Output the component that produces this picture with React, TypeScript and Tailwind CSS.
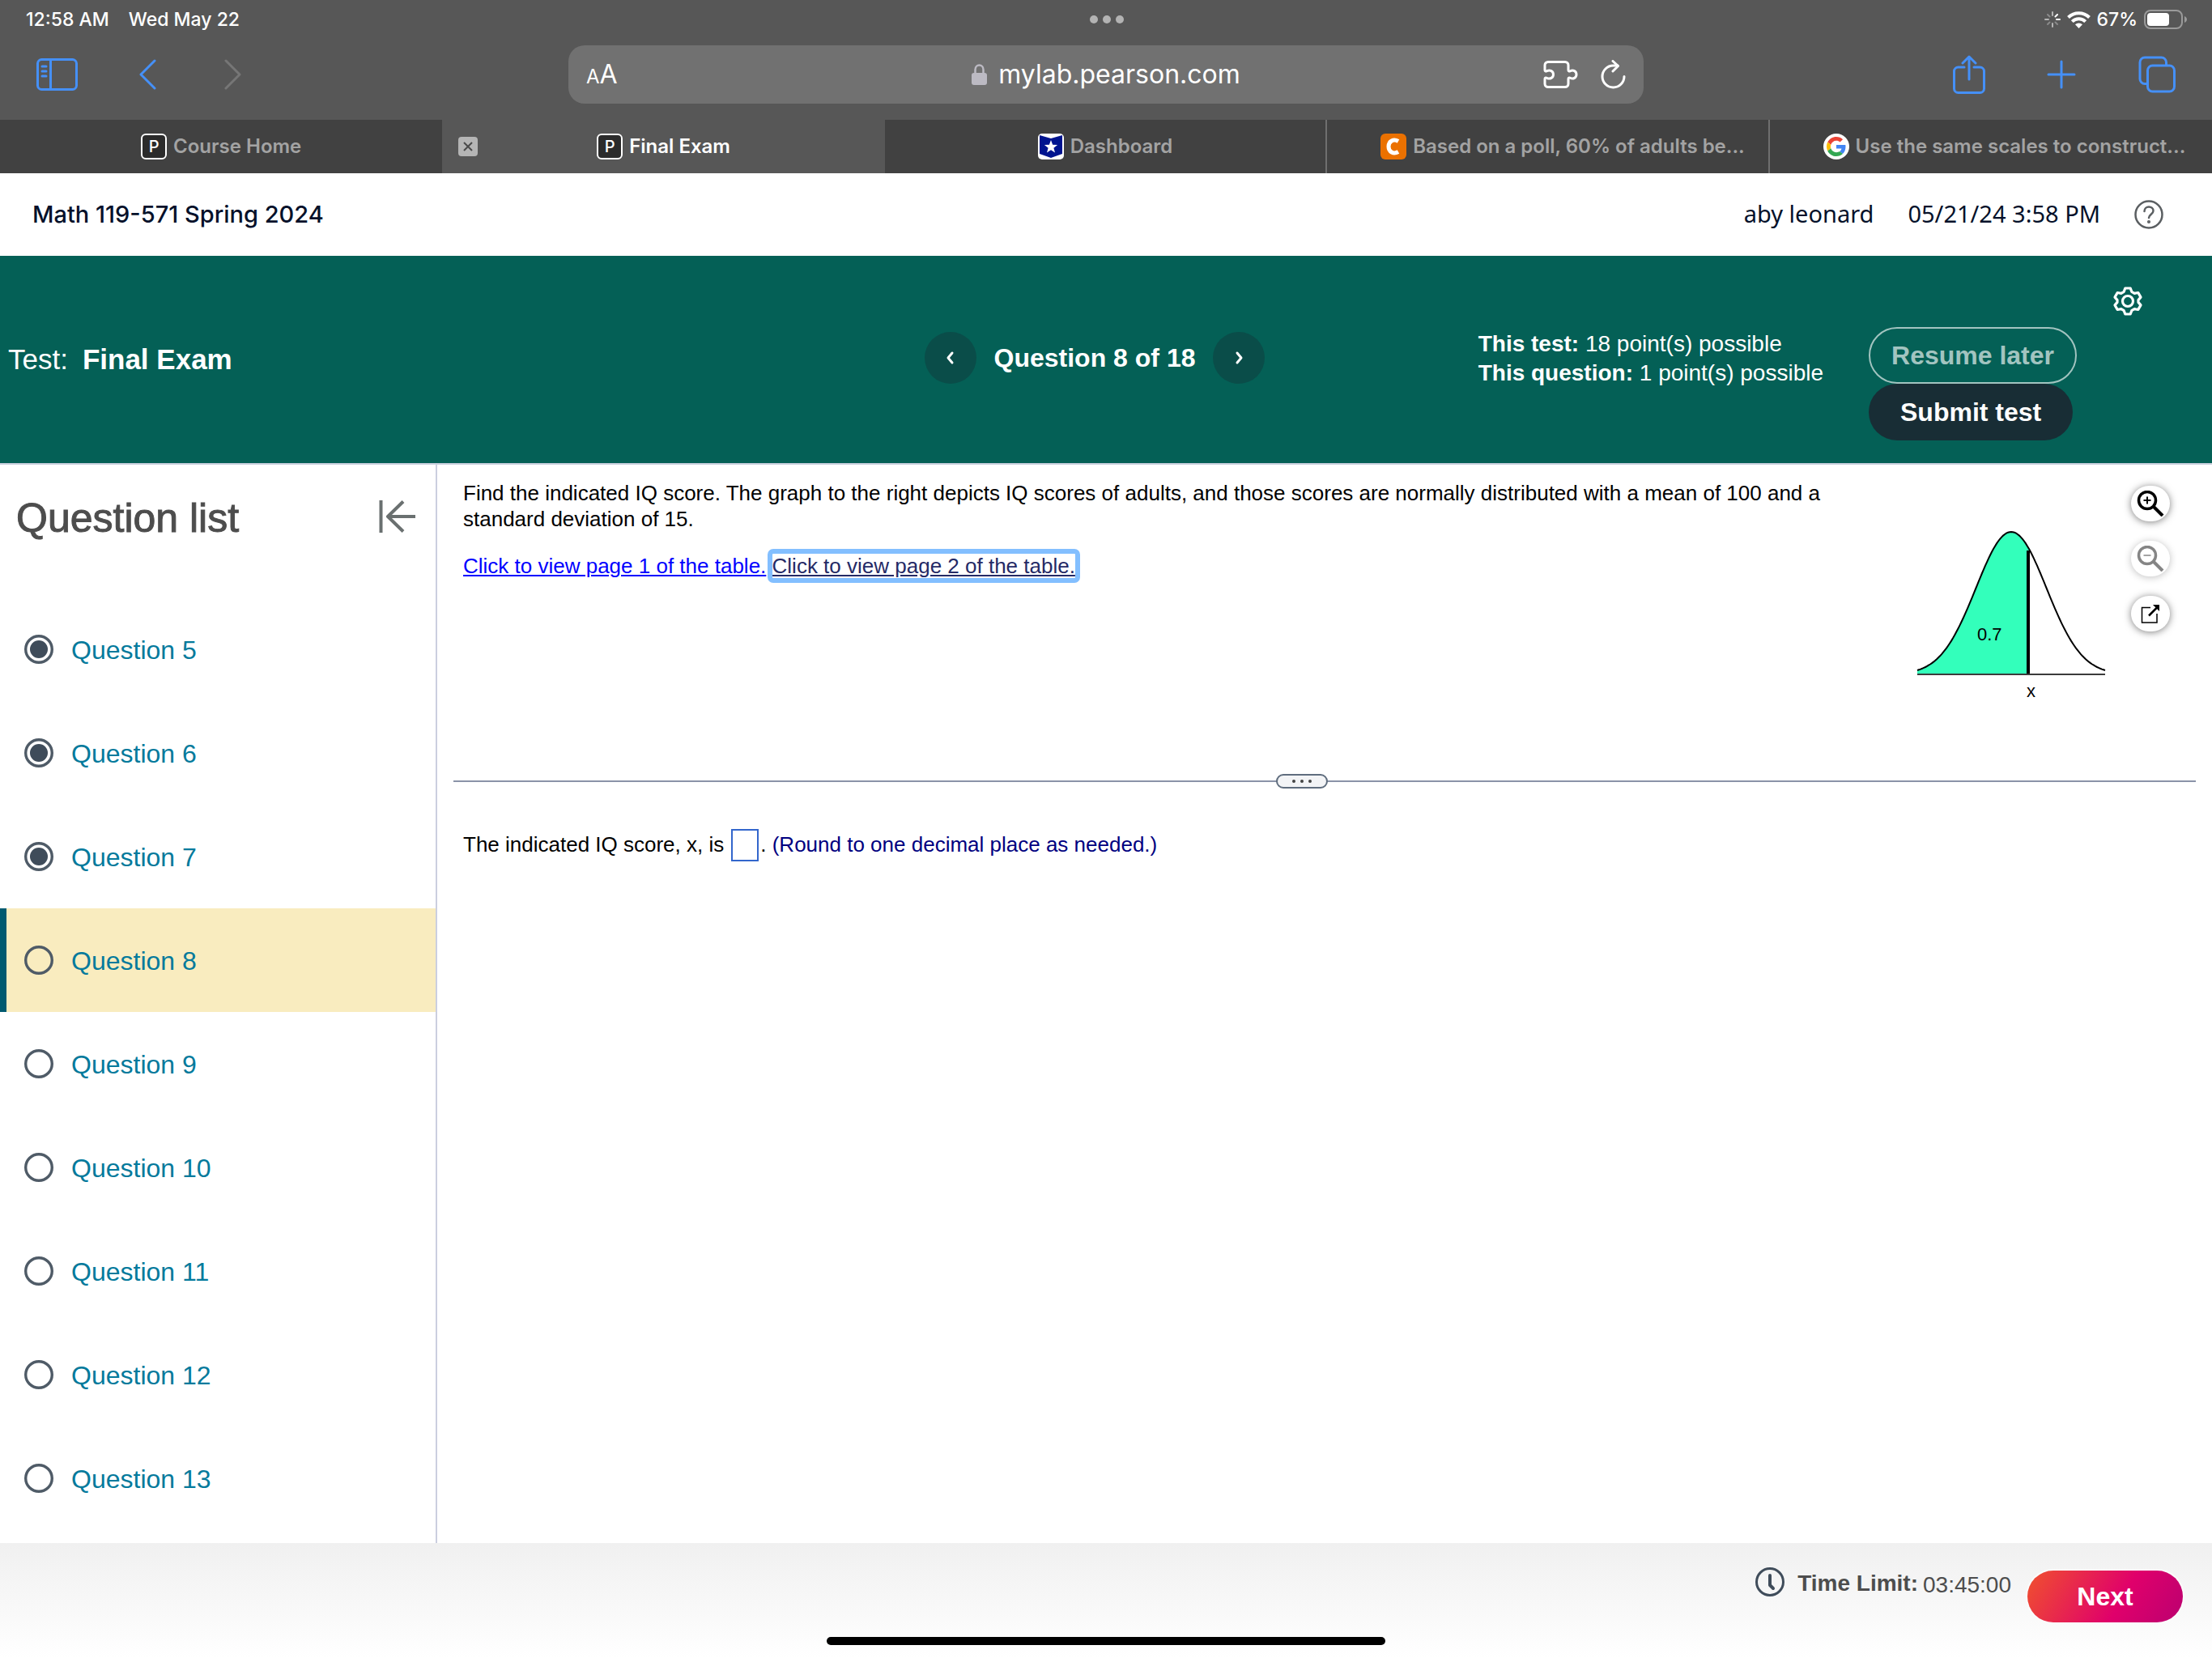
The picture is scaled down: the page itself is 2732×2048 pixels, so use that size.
import type { ReactNode } from "react"
import clsx from "clsx"

type Tab = {
	title: string
	icon: ReactNode
	active?: boolean
	long?: boolean
	divider?: boolean
}

const questions = [5, 6, 7, 8, 9, 10, 11, 12, 13]
const answered = [5, 6, 7]
const current = 8

const iconButton = "flex items-center justify-center shrink-0"

function PearsonIcon() {
	return (
		<span className="flex size-8 shrink-0 items-center justify-center rounded-md border-2 border-white bg-[#2b2b2b] text-[20px] font-medium text-white">
			P
		</span>
	)
}

function StarIcon() {
	return (
		<svg className="size-8 shrink-0" viewBox="0 0 32 32">
			<rect width="32" height="32" rx="5" fill="#fff" />
			<path d="M2 2l14 4 14-4v23l-14 5-14-5z" fill="#00148f" />
			<path
				d="M16 8l2.100 5.700 6 .2-4.700 3.800 1.600 5.800L16 20.200l-5 3.300 1.600-5.800-4.700-3.800 6-.2z"
				fill="#fff"
			/>
		</svg>
	)
}

function CheggIcon() {
	return (
		<span className="flex size-8 shrink-0 items-center justify-center rounded-md bg-[#eb7100]">
			<svg className="size-6" viewBox="0 0 24 24" fill="none">
				<path
					d="M18 5.500C12 2 6 5.500 6 12s6 10 12 6.500"
					stroke="#fff"
					strokeWidth="5"
				/>
			</svg>
		</span>
	)
}

function GoogleIcon() {
	return (
		<span className="flex size-8 shrink-0 items-center justify-center rounded-full bg-white">
			<svg className="size-6" viewBox="0 0 48 48">
				<path
					fill="#EA4335"
					d="M24 9.500c3.540 0 6.710 1.220 9.210 3.600l6.850-6.850C35.900 2.380 30.470 0 24 0 14.620 0 6.510 5.380 2.560 13.220l7.980 6.190C12.430 13.720 17.740 9.500 24 9.500z"
				/>
				<path
					fill="#4285F4"
					d="M46.980 24.550c0-1.570-.15-3.090-.38-4.550H24v9.020h12.940c-.58 2.960-2.260 5.480-4.780 7.180l7.730 6c4.510-4.180 7.090-10.360 7.090-17.650z"
				/>
				<path
					fill="#FBBC05"
					d="M10.530 28.590c-.48-1.450-.76-2.990-.76-4.590s.27-3.140.76-4.590l-7.980-6.190C.92 16.460 0 20.120 0 24c0 3.880.92 7.540 2.560 10.780l7.970-6.190z"
				/>
				<path
					fill="#34A853"
					d="M24 48c6.480 0 11.930-2.130 15.890-5.810l-7.730-6c-2.150 1.450-4.920 2.300-8.160 2.300-6.260 0-11.570-4.220-13.470-9.910l-7.980 6.190C6.510 42.620 14.620 48 24 48z"
				/>
			</svg>
		</span>
	)
}

const tabs: Tab[] = [
	{ title: "Course Home", icon: <PearsonIcon /> },
	{ title: "Final Exam", icon: <PearsonIcon />, active: true },
	{ title: "Dashboard", icon: <StarIcon />, divider: true },
	{
		title: "Based on a poll, 60% of adults be...",
		icon: <CheggIcon />,
		long: true,
		divider: true,
	},
	{
		title: "Use the same scales to construct...",
		icon: <GoogleIcon />,
		long: true,
	},
]

function StatusBar() {
	return (
		<div className="grid h-12 grid-cols-[1fr_auto_1fr] items-center pr-[30px] pl-8 text-[23px] font-medium text-white">
			<div className="flex gap-6">
				<span>12:58 AM</span>
				<span>Wed May 22</span>
			</div>
			<div className="flex gap-1.5">
				<span className="size-2.5 rounded-full bg-[#b3b3b3]" />
				<span className="size-2.5 rounded-full bg-[#b3b3b3]" />
				<span className="size-2.5 rounded-full bg-[#b3b3b3]" />
			</div>
			<div className="flex items-center justify-end gap-2">
				<svg
					className="size-5"
					viewBox="0 0 20 20"
					stroke="#b5b5b5"
					strokeWidth="2"
					strokeLinecap="round"
				>
					<path d="M10 1v4M10 15v4M1 10h4" />
					<path d="M15 10h4M13.500 6.500l2.500-2.500" stroke="#fff" />
					<path
						d="M6.500 6.500L4 4M6.500 13.500L4 16M13.500 13.500l2.500 2.500"
						stroke="#8a8a8a"
					/>
				</svg>
				<svg className="h-[21px] w-[29px]" viewBox="0 0 29 21" fill="none" stroke="#fff">
					<path d="M1.500 7.500a18.500 18.500 0 0 1 26 0" strokeWidth="4" />
					<path d="M6.300 12.700a11.600 11.600 0 0 1 16.400 0" strokeWidth="4" />
					<path d="M14.500 21l-4.500-4.700a6.500 6.500 0 0 1 9 0z" fill="#fff" stroke="none" />
				</svg>
				<span>67%</span>
				<svg className="h-6 w-[54px]" viewBox="0 0 54 24">
					<rect
						x="1"
						y="1"
						width="46"
						height="22"
						rx="7"
						fill="none"
						stroke="#9a9a9a"
						strokeWidth="2"
					/>
					<rect x="4" y="4" width="27" height="16" rx="4" fill="#fff" />
					<path d="M50 8c4 1.500 4 6.500 0 8z" fill="#9a9a9a" />
				</svg>
			</div>
		</div>
	)
}

function Toolbar() {
	return (
		<div className="grid grid-cols-[37fr_70fr_37fr] items-center pt-2 pb-5 text-[#4590f8]">
			<div className="flex items-center pl-[45px]">
				<button aria-label="Show sidebar" className={iconButton}>
					<svg
						className="h-10 w-[51px]"
						viewBox="0 0 51 40"
						fill="none"
						stroke="currentColor"
						strokeWidth="3"
						strokeLinecap="round"
					>
						<rect x="1.500" y="1.500" width="48" height="37" rx="5" />
						<path d="M17.500 2v36M7 10h5M7 16h5M7 22h5" />
					</svg>
				</button>
				<button aria-label="Back" className={clsx(iconButton, "ml-[75px]")}>
					<svg
						className="h-[38px] w-6"
						viewBox="0 0 24 38"
						fill="none"
						stroke="currentColor"
						strokeWidth="3"
						strokeLinecap="round"
						strokeLinejoin="round"
					>
						<path d="M20 2L3 19l17 17" />
					</svg>
				</button>
				<button
					aria-label="Forward"
					className={clsx(iconButton, "ml-20 text-[#767676]")}
				>
					<svg
						className="h-[38px] w-6"
						viewBox="0 0 24 38"
						fill="none"
						stroke="currentColor"
						strokeWidth="3"
						strokeLinecap="round"
						strokeLinejoin="round"
					>
						<path d="M4 2l17 17L4 36" />
					</svg>
				</button>
			</div>

			<div className="grid h-[72px] grid-cols-[1fr_auto_1fr] items-center rounded-[20px] bg-[#717171] pr-[22px] pl-[22px] text-white">
				<button aria-label="Page settings" className="flex items-baseline">
					<span className="text-[24px]">A</span>
					<span className="text-[32px]">A</span>
				</button>
				<div className="flex items-center gap-3.5 text-[32px]">
					<svg className="h-7 w-[19px]" viewBox="0 0 19 28">
						<path
							d="M4.500 13V8a5 5.500 0 0 1 10 0v5"
							fill="none"
							stroke="#bcbac3"
							strokeWidth="2.500"
						/>
						<rect y="12" width="19" height="15" rx="3" fill="#bcbac3" />
					</svg>
					<span>mylab.pearson.com</span>
				</div>
				<div className="flex items-center justify-end gap-7">
					<button aria-label="Extensions" className={iconButton}>
						<svg
							className="h-[34px] w-[43px]"
							viewBox="0 0 43 34"
							fill="none"
							stroke="currentColor"
							strokeWidth="3"
							strokeLinejoin="round"
						>
							<path d="M6 1.500h21a4 4 0 0 1 4 4v6c0 1.500 1 2 2.500 1.200 3.500-2 7.500.3 7.500 4.300s-4 6.300-7.500 4.300c-1.500-.8-2.500-.3-2.500 1.200v6a4 4 0 0 1-4 4H6a4 4 0 0 1-4-4v-6c0-1.500 1-2 2.500-1.200 4 2 8-.3 8-4.300s-4-6.300-8-4.300C3 13.500 2 13 2 11.500v-6a4 4 0 0 1 4-4z" />
						</svg>
					</button>
					<button aria-label="Reload" className={iconButton}>
						<svg
							className="h-9 w-[31px]"
							viewBox="0 0 31 36"
							fill="none"
							stroke="currentColor"
							strokeWidth="3"
							strokeLinecap="round"
							strokeLinejoin="round"
						>
							<path d="M29 20.500A13.500 13.500 0 1 1 15.500 7H21" />
							<path d="M15 1.500L21.500 7.500 15 14" />
						</svg>
					</button>
				</div>
			</div>

			<div className="flex items-center justify-end pr-[45px]">
				<button aria-label="Share" className={iconButton}>
					<svg
						className="h-12 w-10"
						viewBox="0 0 40 48"
						fill="none"
						stroke="currentColor"
						strokeWidth="3"
						strokeLinecap="round"
						strokeLinejoin="round"
					>
						<path d="M14 15H6.500a5 5 0 0 0-5 5v21.500a5 5 0 0 0 5 5h27a5 5 0 0 0 5-5V20a5 5 0 0 0-5-5H26" />
						<path d="M20 30V2M12 10l8-8 8 8" />
					</svg>
				</button>
				<button aria-label="New tab" className={clsx(iconButton, "ml-[76px]")}>
					<svg
						className="size-9"
						viewBox="0 0 36 36"
						stroke="currentColor"
						strokeWidth="3"
						strokeLinecap="round"
					>
						<path d="M18 2v32M2 18h32" />
					</svg>
				</button>
				<button aria-label="Show tabs" className={clsx(iconButton, "ml-[77px]")}>
					<svg
						className="size-[46px]"
						viewBox="0 0 46 46"
						fill="none"
						stroke="currentColor"
						strokeWidth="3"
					>
						<rect x="11.500" y="12" width="33" height="32" rx="6" />
						<path d="M11 34.500H8a6 6 0 0 1-6-6V8a6 6 0 0 1 6-6h20.500a6 6 0 0 1 6 6v4" />
					</svg>
				</button>
			</div>
		</div>
	)
}

function TabBar() {
	return (
		<div className="grid grid-cols-5">
			{tabs.map((tab) => (
				<div
					key={tab.title}
					className={clsx(
						"relative flex h-[66px] min-w-0 items-center text-[24px] font-semibold whitespace-nowrap",
						tab.active ? "bg-[#575757] text-white" : "bg-[#414141] text-[#a3a3a3]",
						tab.long ? "pl-[66px]" : "justify-center",
						tab.divider && "border-r-2 border-[#6f6f6f]",
					)}
				>
					{tab.active && (
						<button
							aria-label="Close tab"
							className="absolute left-5 flex size-6 items-center justify-center rounded-sm bg-[#b5b5b5]"
						>
							<svg className="size-3" viewBox="0 0 12 12" stroke="#4a4a4a" strokeWidth="2">
								<path d="M1 1l10 10M11 1L1 11" />
							</svg>
						</button>
					)}
					<button className="flex items-center gap-2">
						{tab.icon}
						{tab.title}
					</button>
				</div>
			))}
		</div>
	)
}

function CourseHeader() {
	return (
		<header className="flex h-[102px] items-center justify-between bg-white pr-[60px] pl-10 text-[#05112a]">
			<h1 className="font-['Inter',sans-serif] text-[29px] font-medium">
				Math 119-571 Spring 2024
			</h1>
			<div className="flex items-center font-['Noto_Sans','Open_Sans',sans-serif] text-[29px]">
				<span className="pb-0.5">aby leonard</span>
				<span className="ml-[42px] pb-0.5">05/21/24 3:58 PM</span>
				<button aria-label="Help" className={clsx(iconButton, "ml-[42px]")}>
					<svg
						className="size-9"
						viewBox="0 0 36 36"
						fill="none"
						stroke="#5b5f62"
						strokeWidth="2.500"
						strokeLinecap="round"
					>
						<circle cx="18" cy="18" r="16.500" />
						<path d="M12.500 14c0-7.500 11-7 11-.5 0 4-5.500 4.500-5.500 8.500" />
						<circle cx="18" cy="27" r=".8" fill="#5b5f62" />
					</svg>
				</button>
			</div>
		</header>
	)
}

function NavCircle({ label, d }: { label: string; d: string }) {
	return (
		<button
			aria-label={label}
			className="flex size-16 items-center justify-center rounded-full bg-[#0a4d49]"
		>
			<svg
				className="size-5"
				viewBox="0 0 20 20"
				fill="none"
				stroke="#fff"
				strokeWidth="3"
				strokeLinecap="round"
				strokeLinejoin="round"
			>
				<path d={d} />
			</svg>
		</button>
	)
}

function TestHeader() {
	return (
		<section className="grid h-64 grid-cols-[1fr_auto_1fr] items-center bg-[#046056] pr-[38px] pl-2.5 text-white">
			<h2 className="flex gap-[18px] text-[35px]">
				Test: <strong>Final Exam</strong>
			</h2>
			<div className="flex items-center pb-1 text-[32px] font-bold">
				<NavCircle label="Previous question" d="M12 4L7 10l5 6" />
				<span className="px-[22px]">Question 8 of 18</span>
				<NavCircle label="Next question" d="M8 4l5 6-5 6" />
			</div>
			<div className="flex items-center justify-end self-stretch pr-12">
				<div className="pb-0.5 text-[28px] leading-9">
					<p>
						<strong>This test:</strong> 18 point(s) possible
					</p>
					<p>
						<strong>This question:</strong> 1 point(s) possible
					</p>
				</div>
				<div className="mt-[60px] ml-14 flex flex-col items-start text-[32px] font-bold">
					<button className="h-[70px] rounded-full border-2 border-[#a2c4c0] px-[26px] text-[#a2c4c0]">
						Resume later
					</button>
					<button className="h-[70px] rounded-full bg-[#182d35] px-[39px]">
						Submit test
					</button>
				</div>
				<button aria-label="Settings" className="mt-[38px] ml-[45px] self-start">
					<svg
						className="size-9"
						viewBox="0 0 36 36"
						fill="none"
						stroke="#fff"
						strokeWidth="3.200"
						strokeLinejoin="round"
					>
						<path d="M14.800 2h6.400l1.600 4.300 3.400 2 4.600-.8 3.200 5.600-3 3.500v2.800l3 3.500-3.200 5.600-4.600-.8-3.400 2-1.600 4.300h-6.400l-1.600-4.300-3.400-2-4.600.8L2 22.900l3-3.500v-2.800l-3-3.500 3.200-5.600 4.600.8 3.400-2z" />
						<circle cx="18" cy="18" r="6.500" />
					</svg>
				</button>
			</div>
		</section>
	)
}

function StatusCircle({ filled }: { filled: boolean }) {
	return (
		<svg className="size-9" viewBox="0 0 36 36">
			<circle cx="18" cy="18" r="16.300" fill="none" stroke="#4f5b67" strokeWidth="3.400" />
			{filled && <circle cx="18" cy="18" r="11" fill="#3f4c5a" />}
		</svg>
	)
}

function QuestionList() {
	return (
		<aside className="w-[540px] shrink-0 border-r-2 border-[#cbcfdf]">
			<div className="flex h-[164px] items-start justify-between pt-9 pr-6 pl-5">
				<h2 className="text-[50px] leading-[60px] text-[#4d4d4d] [-webkit-text-stroke:1px_#4d4d4d]">
					Question list
				</h2>
				<button aria-label="Collapse question list" className="mt-2">
					<svg
						className="h-10 w-[46px]"
						viewBox="0 0 46 40"
						fill="none"
						stroke="#6a7070"
						strokeWidth="4"
						strokeLinejoin="round"
					>
						<path d="M2.500 0v40M45 20H11M30 1.500L11 20l19 18.500" />
					</svg>
				</button>
			</div>
			<nav>
				{questions.map((n) => (
					<a
						key={n}
						href={`#question-${n}`}
						className={clsx(
							"flex h-32 items-center gap-[22px] border-l-8 pl-[22px] text-[32px] text-[#047a9c]",
							n === current ? "border-[#005a70] bg-[#f9ecbf]" : "border-transparent",
						)}
					>
						<StatusCircle filled={answered.includes(n)} />
						<span className="pt-0.5">Question {n}</span>
					</a>
				))}
			</nav>
		</aside>
	)
}

// Normal curve in graph units: peak at x=118, baseline at y=201
function curve(from: number, to: number) {
	const points: string[] = []
	for (let x = from; x <= to; x += 2) {
		const y = 201 - 176 * Math.exp(-((x - 118) ** 2) / (2 * 43.5 ** 2))
		points.push(`${x} ${y.toFixed(1)}`)
	}
	return points.join("L")
}

function Graph() {
	return (
		<svg
			className="mt-[58px] size-[236px] shrink-0"
			viewBox="0 0 236 236"
			fontFamily="Liberation Sans, Arial, sans-serif"
			fontSize="22"
		>
			<path d={`M2 201L${curve(2, 140)}L140 201z`} fill="#33ffbb" />
			<path d={`M${curve(2, 234)}`} fill="none" stroke="#000" strokeWidth="2" />
			<path d="M2 201h232" stroke="#3b3b3b" strokeWidth="2" />
			<path d="M139 48v152" stroke="#000" strokeWidth="4" />
			<text x="76" y="159">
				0.7
			</text>
			<text x="137" y="229">
				x
			</text>
		</svg>
	)
}

function GraphTools() {
	const round = "flex h-11 w-12 items-center justify-center rounded-full bg-white"

	return (
		<div className="mt-[26px] ml-[30px] flex flex-col gap-6">
			<button
				aria-label="Zoom in"
				className={clsx(round, "shadow-[0_1px_10px_rgba(0,0,0,0.5)]")}
			>
				<svg className="h-8 w-[34px]" viewBox="0 0 34 32" fill="none" stroke="#000">
					<circle cx="13" cy="12" r="10.500" strokeWidth="3.500" />
					<path d="M21 20l11 11" strokeWidth="4" />
					<path d="M8.500 12h9M13 7.500v9" strokeWidth="2" />
				</svg>
			</button>
			<button
				aria-label="Zoom out"
				disabled
				className={clsx(round, "shadow-[0_1px_10px_rgba(0,0,0,0.25)]")}
			>
				<svg className="h-8 w-[34px]" viewBox="0 0 34 32" fill="none" stroke="#858585">
					<circle cx="13" cy="12" r="10.500" strokeWidth="3.500" />
					<path d="M21 20l11 11" strokeWidth="4" />
					<path d="M8.500 12h9" strokeWidth="1.500" />
				</svg>
			</button>
			<button
				aria-label="Open in new window"
				className={clsx(round, "shadow-[0_1px_10px_rgba(0,0,0,0.5)]")}
			>
				<svg className="size-6" viewBox="0 0 24 24" fill="none" stroke="#000">
					<path d="M12 4.500H1.500V23H20V12" strokeWidth="1.500" />
					<path d="M10 14.500L20 4.500" strokeWidth="2.500" />
					<path d="M15 1h8v8z" fill="#000" stroke="none" />
				</svg>
			</button>
		</div>
	)
}

function Problem() {
	return (
		<main className="min-w-0 flex-1 px-5 text-[26px] leading-8 text-black">
			<div className="flex h-[390px] items-start pr-8 pl-3">
				<div className="min-w-0 flex-1 pt-[19px] pr-24">
					<p>
						Find the indicated IQ score. The graph to the right depicts IQ scores of
						adults, and those scores are normally distributed with a mean of 100 and a
						standard deviation of 15.
					</p>
					<p className="mt-[26px]">
						<a href="#table-1" className="text-[#0000ff] underline underline-offset-2">
							Click to view page 1 of the table.
						</a>{" "}
						<a
							href="#table-2"
							className="rounded-[1px] text-[#252a66] underline underline-offset-2 outline-[6px] outline-[#83bfff]"
						>
							Click to view page 2 of the table.
						</a>
					</p>
				</div>
				<Graph />
				<GraphTools />
			</div>

			<div className="relative border-t-2 border-[#8a93a8]">
				<button
					aria-label="Resize panes"
					className="absolute -top-2.5 left-[1016px] flex h-[18px] w-16 items-center justify-center gap-1.5 rounded-full border-2 border-[#5f6d7e] bg-[#f3f4f6]"
				>
					<span className="size-1 rounded-full bg-[#444]" />
					<span className="size-1 rounded-full bg-[#444]" />
					<span className="size-1 rounded-full bg-[#444]" />
				</button>
			</div>

			<div className="flex items-center pt-[58px] pl-3">
				<label htmlFor="answer" className="pb-0.5">
					The indicated IQ score, x, is
				</label>
				<input
					id="answer"
					type="text"
					className="mr-0.5 ml-[9px] h-10 w-[34px] border-2 border-[#3366cc] bg-white"
				/>
				<span className="pb-0.5 whitespace-pre">. </span>
				<span className="pb-0.5 text-[#000080]">
					(Round to one decimal place as needed.)
				</span>
			</div>
		</main>
	)
}

function Footer() {
	return (
		<footer className="relative flex h-[142px] items-start justify-end bg-linear-to-b from-[#f0f0f0] to-white pr-9 text-[28px] leading-9 text-[#4d4d4d]">
			<svg
				className="mt-[30px] size-9"
				viewBox="0 0 36 36"
				fill="none"
				stroke="#3f4c5a"
				strokeLinecap="round"
				strokeLinejoin="round"
			>
				<circle cx="18" cy="18" r="16.500" strokeWidth="3" />
				<path d="M18 10v12l4 4" strokeWidth="4" />
			</svg>
			<strong className="mt-8 ml-4">Time Limit:</strong>
			<span className="mt-[34px] ml-1.5">03:45:00</span>
			<button className="mt-[34px] ml-5 h-16 w-48 rounded-full bg-[linear-gradient(120deg,#f0512e_0%,#e0006b_60%,#bb0070_100%)] text-[32px] font-bold text-white ring-2 ring-[#fbfbfb]">
				Next
			</button>
			<div className="absolute inset-x-0 bottom-4 mx-auto h-2.5 w-[690px] rounded-full bg-black" />
		</footer>
	)
}

export default function App() {
	return (
		<div className="flex min-h-screen flex-col bg-white font-['Liberation_Sans',Arial,sans-serif]">
			<div className="bg-[#575757] font-['Inter',sans-serif]">
				<StatusBar />
				<Toolbar />
				<TabBar />
			</div>
			<CourseHeader />
			<TestHeader />
			<div className="flex flex-1 border-t-2 border-[#c9cfdd]">
				<QuestionList />
				<Problem />
			</div>
			<Footer />
		</div>
	)
}
